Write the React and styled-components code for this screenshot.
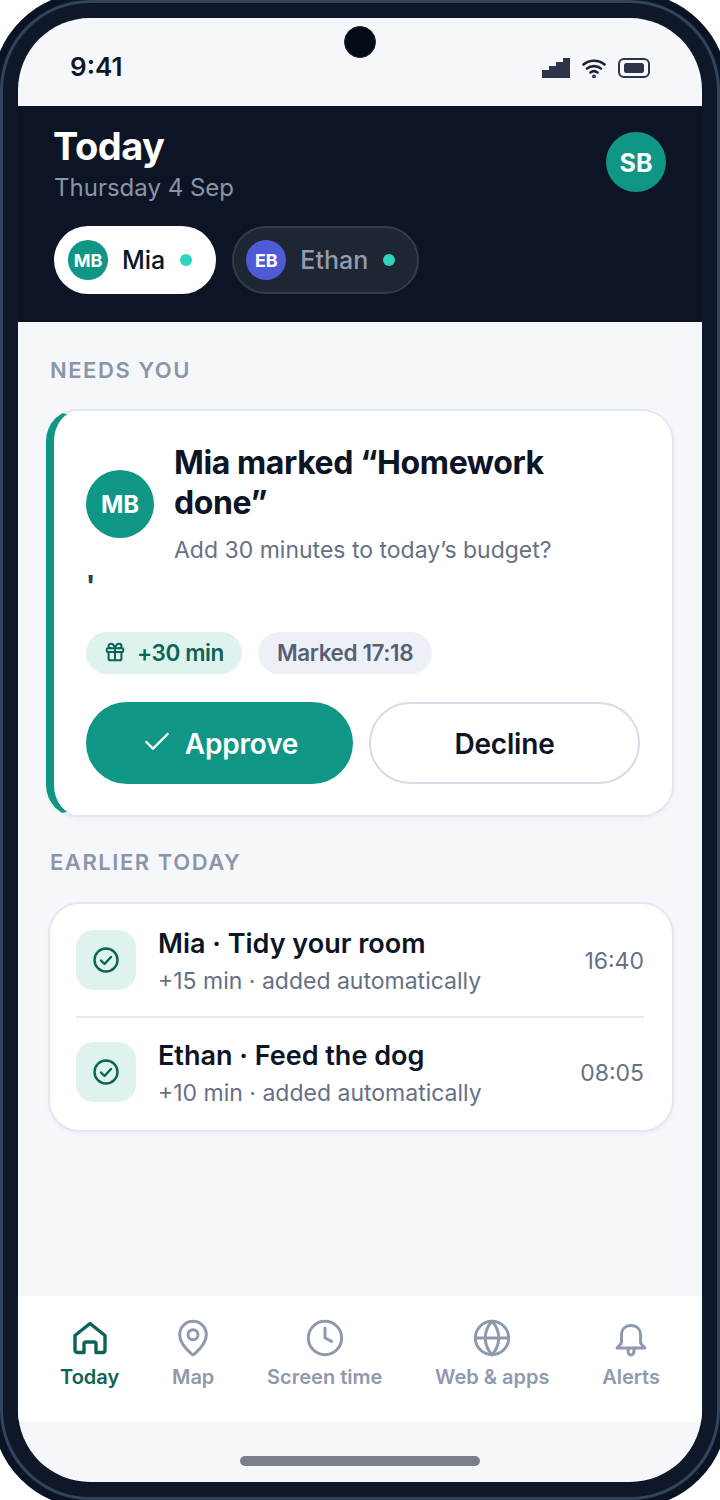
import React from 'react'
import styled, { createGlobalStyle } from 'styled-components'
import { Check, Clock, Gift, Globe, MapPin } from 'lucide-react'

const GlobalStyle = createGlobalStyle`
  html, body {
    margin: 0;
    background: #fff;
  }
  * {
    box-sizing: border-box;
  }
`

const GREEN = '#109684'
const DARK_GREEN = '#0b6455'
const INK = '#0c1425'

const Phone = styled.div`
  width: 720px;
  height: 1500px;
  padding: 15px;
  border: 3px solid #33445a;
  border-radius: 90px;
  background: #0f1829;
  box-shadow: 0 0 0 8px #0a1424;
  position: relative;
  overflow: hidden;
  font-family: Inter, "Liberation Sans", sans-serif;
`

const Screen = styled.div`
  height: 100%;
  border-radius: 72px;
  background: #f5f7fb;
  overflow: hidden;
  display: flex;
  flex-direction: column;
`

const Camera = styled.div`
  position: absolute;
  left: 341px;
  top: 23px;
  width: 32px;
  height: 32px;
  border-radius: 50%;
  background: #050b16;
  border: 1px solid #17233a;
`

const StatusBar = styled.div`
  height: 88px;
  flex: none;
  padding: 8px 52px 0;
  display: flex;
  align-items: center;
  justify-content: space-between;
`

const Clockface = styled.span`
  font-size: 26px;
  font-weight: 600;
  color: ${INK};
`

const StatusIcons = styled.div`
  margin-top: 4px;
  display: flex;
  align-items: center;
  gap: 12px;
`

const Header = styled.header`
  height: 216px;
  flex: none;
  background: ${INK};
  padding: 17px 36px 28px;
  display: flex;
  flex-direction: column;
  justify-content: space-between;
`

const HeaderTop = styled.div`
  display: flex;
  justify-content: space-between;
  align-items: flex-start;
`

const Title = styled.h1`
  margin: 0 0 0 -1px;
  font-size: 38px;
  line-height: 46px;
  font-weight: 700;
  letter-spacing: -0.5px;
  color: #fff;
`

const DateLine = styled.div`
  margin-top: 4px;
  font-size: 24px;
  line-height: 30px;
  color: #8b95a8;
`

const Avatar = styled.div`
  flex: none;
  width: ${p => p.$size}px;
  height: ${p => p.$size}px;
  border-radius: 50%;
  background: ${p => p.$color || GREEN};
  color: #fff;
  font-size: ${p => p.$font}px;
  font-weight: 700;
  display: flex;
  align-items: center;
  justify-content: center;
`

const TopAvatar = styled(Avatar)`
  margin-top: 9px;
  padding-top: 2px;
`

const Pills = styled.div`
  display: flex;
  gap: 16px;
`

const Pill = styled.div`
  height: 68px;
  padding: 0 24px 0 14px;
  border-radius: 34px;
  display: flex;
  align-items: center;
  font-size: 25px;
  font-weight: 500;
  background: ${p => (p.$active ? '#fff' : '#1e2634')};
  color: ${p => (p.$active ? INK : '#929cb1')};
  border: ${p => (p.$active ? 'none' : '2px solid #343c4b')};
  ${p => !p.$active && 'padding-left: 12px; padding-right: 22px;'}
`

const PillName = styled.span`
  margin: 0 15px 0 14px;
`

const Dot = styled.span`
  width: 12px;
  height: 12px;
  border-radius: 50%;
  background: #2dd4bf;
`

const Content = styled.main`
  flex: 1;
  padding: 34px 28px 0;
`

const SectionLabel = styled.div`
  padding-left: 4px;
  font-size: 22px;
  line-height: 28px;
  font-weight: 600;
  letter-spacing: 1.55px;
  color: #8b95a8;
`

const ActionCard = styled.section`
  margin: 25px 0 31px;
  height: 408px;
  padding: 32px;
  border: 2px solid #e3e7f0;
  border-left: 8px solid ${GREEN};
  border-radius: 32px;
  background: #fff;
  box-shadow: 0 2px 4px rgba(15, 23, 42, 0.04);
`

const CardHead = styled.div`
  display: flex;
  align-items: center;
  gap: 20px;
  height: 122px;
`

const CardTitle = styled.h2`
  margin: 0;
  font-size: 32px;
  line-height: 40px;
  font-weight: 700;
  letter-spacing: -0.4px;
  color: ${INK};
`

const CardSub = styled.div`
  margin-top: 12px;
  font-size: 23px;
  line-height: 30px;
  color: #667085;
`

const Stray = styled.div`
  height: 67px;
  padding-top: 5px;
  font-size: 26px;
  line-height: 30px;
  font-weight: 800;
  color: #334155;
`

const Chips = styled.div`
  display: flex;
  gap: 16px;
`

const Chip = styled.span`
  height: 42px;
  padding: 0 ${p => (p.$tone === 'green' ? 18 : 19)}px 2px;
  border-radius: 21px;
  display: flex;
  align-items: center;
  gap: 11px;
  font-size: 22.5px;
  font-weight: 600;
  letter-spacing: -0.4px;
  background: ${p => (p.$tone === 'green' ? '#dff3ee' : '#eef0f7')};
  color: ${p => (p.$tone === 'green' ? DARK_GREEN : '#566074')};
`

const Buttons = styled.div`
  margin-top: 28px;
  display: flex;
  gap: 16px;
`

const Button = styled.button`
  flex: 1;
  height: 82px;
  padding: 2px 0 0;
  border-radius: 41px;
  font-family: inherit;
  font-size: 28px;
  font-weight: 600;
  letter-spacing: -0.2px;
  display: flex;
  align-items: center;
  justify-content: center;
  gap: 12px;
  background: ${p => (p.$primary ? GREEN : '#fff')};
  color: ${p => (p.$primary ? '#fff' : INK)};
  border: ${p => (p.$primary ? 'none' : '2px solid #d5dbe7')};
`

const ApproveCheck = styled(Check)`
  margin-top: -5px;
`

const ListCard = styled.section`
  margin: 26px 0 0 2px;
  padding: 2px 28px 4px 26px;
  border: 2px solid #e3e7f0;
  border-radius: 32px;
  background: #fff;
  box-shadow: 0 2px 4px rgba(15, 23, 42, 0.04);
`

const Row = styled.div`
  padding: 24px 0;
  display: flex;
  align-items: center;
  gap: 22px;
  &:first-child {
    padding-bottom: 26px;
  }
  & + & {
    border-top: 2px solid #e3e7f0;
  }
`

const RowIcon = styled.div`
  flex: none;
  width: 60px;
  height: 60px;
  border-radius: 18px;
  background: #dff3ee;
  color: ${DARK_GREEN};
  display: flex;
  align-items: center;
  justify-content: center;
`

const RowBody = styled.div`
  flex: 1;
  height: 60px;
`

const RowTitle = styled.div`
  font-size: 27px;
  line-height: 28px;
  font-weight: 600;
  color: ${INK};
`

const RowSub = styled.div`
  margin-top: 10px;
  font-size: 23px;
  line-height: 26px;
  color: #667085;
`

const RowTime = styled.div`
  padding-top: 2px;
  font-size: 23px;
  color: #667085;
`

const Nav = styled.nav`
  height: 126px;
  flex: none;
  background: #fff;
  padding: 23px 42px 0;
  display: flex;
  justify-content: space-between;
  align-items: flex-start;
`

const NavItem = styled.div`
  display: flex;
  flex-direction: column;
  align-items: center;
  gap: 6px;
  font-size: 20px;
  line-height: 28px;
  font-weight: 600;
  color: ${p => (p.$active ? DARK_GREEN : '#8f99ad')};
`

const NavGlyph = styled.div`
  height: 38px;
  display: flex;
  align-items: center;
  justify-content: center;
`

const HomeArea = styled.div`
  height: 60px;
  flex: none;
  display: flex;
  justify-content: center;
  padding-top: 34px;
`

const HomeBar = styled.div`
  width: 240px;
  height: 10px;
  border-radius: 5px;
  background: #7b7f8c;
`

const SignalIcon = () => (
  <svg width="28" height="20" viewBox="0 0 28 20" fill="#2b3448">
    <path d="M0 20V12H7V8H14V4H21V0H28V20Z" />
  </svg>
)

const WifiIcon = () => (
  <svg width="24" height="20" viewBox="0 0 24 20" fill="none" stroke="#1a2233" strokeWidth="2.6" strokeLinecap="round">
    <path d="M1.500 6.500C7.500 1.500 16.500 1.500 22.500 6.500" />
    <path d="M5 10.500C9 7.300 15 7.300 19 10.500" />
    <path d="M8.500 14.500C10.500 13 13.500 13 15.500 14.500" />
    <circle cx="12" cy="18.400" r="0.600" fill="#1a2233" />
  </svg>
)

const BatteryIcon = () => (
  <svg width="32" height="20" viewBox="0 0 32 20">
    <rect x="1" y="1" width="30" height="18" rx="5" fill="none" stroke="#2b3448" strokeWidth="2" />
    <rect x="6" y="5" width="20" height="10" rx="2.500" fill="#2b3448" />
  </svg>
)

const HomeIcon = () => (
  <svg width="36" height="36" viewBox="0 0 36 36" fill="none" stroke="currentColor" strokeWidth="3.4" strokeLinejoin="round">
    <path d="M18 3.500L33 15.500V30Q33 32.500 30.500 32.500H24V24Q24 22 22 22H14Q12 22 12 24V32.500H5.500Q3 32.500 3 30V15.500Z" />
  </svg>
)

const BellIcon = () => (
  <svg width="36" height="40" viewBox="0 0 36 40" fill="none" stroke="currentColor" strokeWidth="3" strokeLinecap="round" strokeLinejoin="round">
    <path d="M8.500 17C8.500 11 12.500 7.500 18 7.500S27.500 11 27.500 17V24C27.500 26 30 28 32 30H4C6 28 8.500 26 8.500 24Z" />
    <path d="M15 32C15 38.500 21 38.500 21 32" />
  </svg>
)

const DoneIcon = () => (
  <svg width="28" height="28" viewBox="0 0 28 28" fill="none" stroke="currentColor" strokeWidth="2.4" strokeLinecap="round" strokeLinejoin="round">
    <circle cx="14" cy="14" r="11.500" />
    <path d="M9 14.500L12.500 18L19 11" />
  </svg>
)

const tabs = [
  { label: 'Today', icon: <HomeIcon />, active: true },
  { label: 'Map', icon: <MapPin size={40} strokeWidth={1.8} /> },
  { label: 'Screen time', icon: <Clock size={40} strokeWidth={1.8} /> },
  { label: 'Web & apps', icon: <Globe size={40} strokeWidth={1.8} /> },
  { label: 'Alerts', icon: <BellIcon /> },
]

const history = [
  { title: 'Mia · Tidy your room', sub: '+15 min · added automatically', time: '16:40' },
  { title: 'Ethan · Feed the dog', sub: '+10 min · added automatically', time: '08:05' },
]

const App = () => (
  <>
    <GlobalStyle />
    <Phone>
      <Screen>
        <StatusBar>
          <Clockface>9:41</Clockface>
          <StatusIcons>
            <SignalIcon />
            <WifiIcon />
            <BatteryIcon />
          </StatusIcons>
        </StatusBar>

        <Header>
          <HeaderTop>
            <div>
              <Title>Today</Title>
              <DateLine>Thursday 4 Sep</DateLine>
            </div>
            <TopAvatar $size={60} $font={25}>SB</TopAvatar>
          </HeaderTop>
          <Pills>
            <Pill $active>
              <Avatar $size={40} $font={18}>MB</Avatar>
              <PillName>Mia</PillName>
              <Dot />
            </Pill>
            <Pill>
              <Avatar $size={40} $font={18} $color="#4f5bd5">EB</Avatar>
              <PillName>Ethan</PillName>
              <Dot />
            </Pill>
          </Pills>
        </Header>

        <Content>
          <SectionLabel>NEEDS YOU</SectionLabel>
          <ActionCard>
            <CardHead>
              <Avatar $size={68} $font={24}>MB</Avatar>
              <div>
                <CardTitle>Mia marked “Homework done”</CardTitle>
                <CardSub>Add 30 minutes to today’s budget?</CardSub>
              </div>
            </CardHead>
            <Stray>'</Stray>
            <Chips>
              <Chip $tone="green">
                <Gift size={22} strokeWidth={2.2} />
                +30 min
              </Chip>
              <Chip>Marked 17:18</Chip>
            </Chips>
            <Buttons>
              <Button $primary>
                <ApproveCheck size={32} strokeWidth={1.8} />
                Approve
              </Button>
              <Button>Decline</Button>
            </Buttons>
          </ActionCard>

          <SectionLabel>EARLIER TODAY</SectionLabel>
          <ListCard>
            {history.map(item => (
              <Row key={item.title}>
                <RowIcon>
                  <DoneIcon />
                </RowIcon>
                <RowBody>
                  <RowTitle>{item.title}</RowTitle>
                  <RowSub>{item.sub}</RowSub>
                </RowBody>
                <RowTime>{item.time}</RowTime>
              </Row>
            ))}
          </ListCard>
        </Content>

        <Nav>
          {tabs.map(tab => (
            <NavItem key={tab.label} $active={tab.active}>
              <NavGlyph>{tab.icon}</NavGlyph>
              {tab.label}
            </NavItem>
          ))}
        </Nav>

        <HomeArea>
          <HomeBar />
        </HomeArea>
      </Screen>
      <Camera />
    </Phone>
  </>
)

export default App
